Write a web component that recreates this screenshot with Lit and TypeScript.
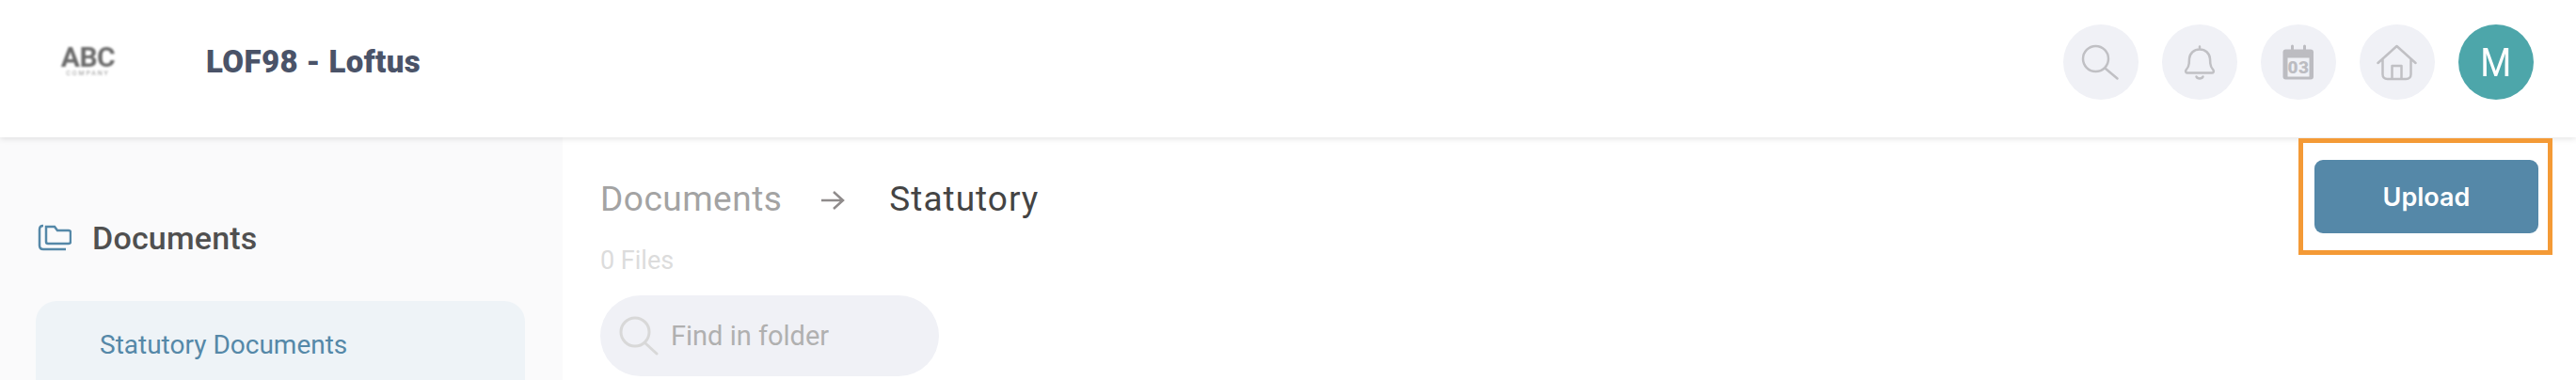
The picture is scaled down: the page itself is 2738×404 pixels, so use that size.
import { LitElement, html, css, svg } from "lit";
import { customElement } from "lit/decorators.js";

const searchIcon = svg`<circle cx="34.5" cy="36.5" r="13.5"/><path d="M45 47 57.5 57.5"/>`;
const bellIcon = svg`<path d="M40 26.5c-6 0-10.5 4-11 10l-.3 5c-.2 3-1.5 5-3.2 7-1 1.5 0 3 1.5 3h26c1.500 0 2.500-1.500 1.500-3-1.700-2-3-4-3.200-7l-.3-5c-.5-6-5-10-11-10zM40 23.500v3M36.500 55.500c1 2.500 6 2.500 7 0"/>`;
const calIcon = svg`<rect x="23.500" y="26.500" width="32.500" height="32" rx="3" fill="#bcbcc1" stroke="none"/>
  <path d="M33.500 23v6M46.500 23v6" stroke="#bcbcc1" stroke-width="3"/>
  <rect x="28.500" y="35.500" width="23" height="20" fill="#f0f1f6" stroke="none"/>
  <text x="40" y="52" class="cal">03</text>`;
const homeIcon = svg`<path d="M19.500 41 39.500 23 59.500 41M24.500 37v16c0 3 2 5 5 5h20c3 0 5-2 5-5V37M34.500 58V44h10v14"/>`;

@customElement("app-root")
export class AppRoot extends LitElement {
  static styles = css`
    :host {
      display: block;
      width: 2738px;
      height: 404px;
      overflow: hidden;
      position: relative;
      font-family: "Roboto", "Liberation Sans", sans-serif;
      background: #fff;
    }
    header {
      height: 146px;
      display: flex;
      align-items: center;
      padding: 0 45px 14px 65px;
      box-sizing: border-box;
      background: #fff;
      box-shadow: 0 2px 6px rgba(0, 0, 0, 0.1);
      position: relative;
      z-index: 1;
    }
    .logo {
      width: 57px;
      margin-right: 97px;
      display: flex;
      flex-direction: column;
      align-items: center;
      filter: blur(0.9px);
      color: #6c6c6c;
    }
    .abc {
      font-size: 30px;
      line-height: 24px;
      font-weight: 700;
      letter-spacing: -0.5px;
    }
    .co {
      font-size: 7px;
      line-height: 10px;
      letter-spacing: 1.9px;
      color: #9a9a9a;
      white-space: nowrap;
    }
    .title {
      font-size: 33px;
      font-weight: 900;
      color: #4a5368;
      letter-spacing: 0.4px;
      padding-bottom: 2px;
      flex: 1;
    }
    .actions {
      display: flex;
      gap: 25px;
    }
    .circle {
      width: 80px;
      height: 80px;
      border-radius: 50%;
      background: #f0f1f6;
    }
    .circle svg {
      display: block;
      fill: none;
      stroke: #c0c0c4;
      stroke-width: 2.5;
      stroke-linecap: round;
      stroke-linejoin: round;
    }
    .cal {
      font: 900 19px "Roboto", sans-serif;
      fill: #bcbcc1;
      stroke: none;
      text-anchor: middle;
      letter-spacing: 0.5px;
    }
    .avatar {
      background: #4da6aa;
      color: #fff;
      font-size: 43px;
      display: flex;
      align-items: center;
      justify-content: center;
    }
    .avatar span {
      display: block;
      transform: scaleX(0.88);
    }
    .body {
      display: flex;
      height: 258px;
    }
    aside {
      width: 598px;
      flex: none;
      background: #fafafb;
      padding: 92px 40px 0 38px;
      box-sizing: border-box;
    }
    .side-head {
      display: flex;
      align-items: center;
      gap: 22px;
      height: 30px;
      padding-left: 2px;
      font-size: 34px;
      letter-spacing: 0.2px;
      font-weight: 500;
      color: #505050;
    }
    .side-head svg {
      display: block;
      flex: none;
      fill: none;
      stroke: #5588a8;
      stroke-width: 2.5;
    }
    .item {
      margin-top: 52px;
      height: 140px;
      background: #eef3f7;
      border-radius: 22px;
      padding: 29px 0 0 68px;
      box-sizing: border-box;
      font-size: 28px;
      line-height: 36px;
      color: #5588a8;
    }
    main {
      flex: 1;
      padding: 24px 40px 0;
      position: relative;
    }
    .top {
      display: flex;
      justify-content: space-between;
      align-items: flex-start;
    }
    .crumbs {
      display: flex;
      align-items: center;
      height: 56px;
      margin-top: 13px;
      font-size: 37px;
      letter-spacing: 0.5px;
      color: #a3a3a3;
    }
    .crumbs svg {
      margin: 3px 47px 0 41px;
      fill: none;
      stroke: #8f8b8b;
      stroke-width: 2.5;
      display: block;
    }
    .crumbs b {
      font-weight: 400;
      letter-spacing: 1px;
      color: #444;
    }
    .upload {
      width: 238px;
      height: 78px;
      border-radius: 9px;
      border: 0;
      padding: 0;
      background: #5588a8;
      color: #fff;
      font: 600 27px "Inter", sans-serif;
    }
    .count {
      margin-top: 14px;
      font-size: 27px;
      line-height: 30px;
      color: #dcdcdc;
    }
    .search {
      margin-top: 22px;
      width: 360px;
      height: 86px;
      border-radius: 43px;
      background: #f0f1f6;
      display: flex;
      align-items: center;
      gap: 13px;
      padding-left: 20px;
      box-sizing: border-box;
      font-size: 29px;
      color: #b0b0b0;
    }
    .search svg {
      display: block;
      fill: none;
      stroke: #d8d8d8;
      stroke-width: 3;
      stroke-linecap: round;
    }
    .mark {
      position: absolute;
      left: 2443px;
      top: 147px;
      width: 270px;
      height: 124px;
      box-sizing: border-box;
      border: 5px solid #f49a36;
      z-index: 2;
    }
  `;

  private icon(content: unknown) {
    return html`<div class="circle"><svg width="80" height="80" viewBox="0 0 80 80">${content}</svg></div>`;
  }

  render() {
    return html`
      <header>
        <div class="logo"><span class="abc">ABC</span><span class="co">COMPANY</span></div>
        <div class="title">LOF98 - Loftus</div>
        <div class="actions">
          ${this.icon(searchIcon)} ${this.icon(bellIcon)} ${this.icon(calIcon)} ${this.icon(homeIcon)}
          <div class="circle avatar"><span>M</span></div>
        </div>
      </header>
      <div class="body">
        <aside>
          <div class="side-head">
            <svg width="36" height="30" viewBox="0 0 36 30">
              <path d="M9 3h9l3 4h12c1.300 0 2 .7 2 2v10c0 1.300-.7 2-2 2H11c-1.300 0-2-.7-2-2z" />
              <path d="M6 2C3.500 2 2 3.500 2 6v17c0 2.500 1.500 4 4 4h24" />
            </svg>
            Documents
          </div>
          <div class="item">Statutory Documents</div>
        </aside>
        <main>
          <div class="top">
            <div class="crumbs">
              Documents
              <svg width="26" height="24" viewBox="0 0 26 24"><path d="M1 12h23M14 3l10 9-10 9" /></svg>
              <b>Statutory</b>
            </div>
            <button class="upload">Upload</button>
          </div>
          <div class="count">0 Files</div>
          <div class="search">
            <svg width="42" height="42" viewBox="0 0 42 42"><circle cx="17" cy="17" r="15" /><path d="M28 29l12 11" /></svg>
            Find in folder
          </div>
        </main>
      </div>
      <div class="mark"></div>
    `;
  }
}
